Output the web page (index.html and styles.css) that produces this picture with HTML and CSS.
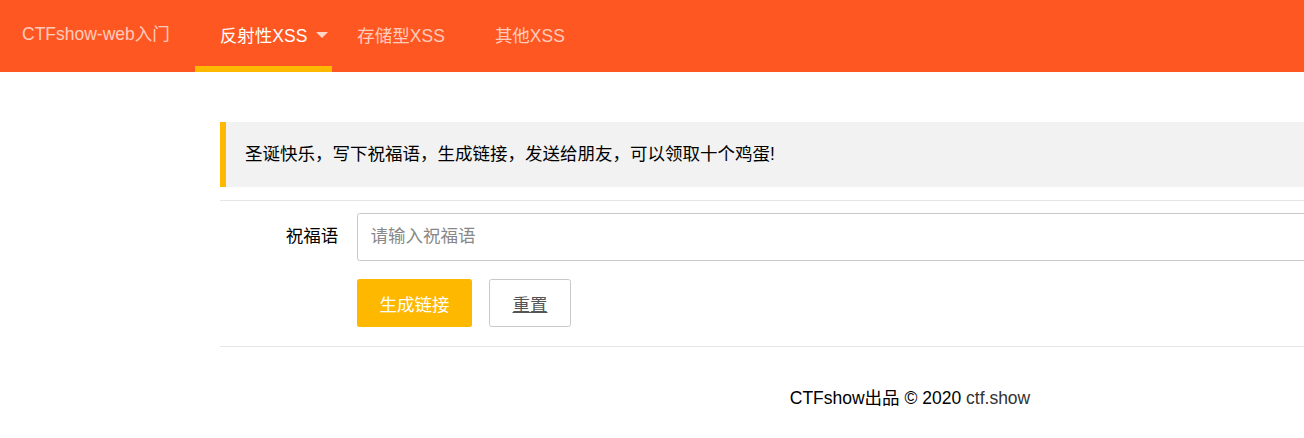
FILE: index.html
```html
<!DOCTYPE html>
<html lang="zh-CN">
<head>
<meta charset="utf-8">
<title>CTFshow-web入门</title>
<link rel="stylesheet" href="styles.css">
</head>
<body>
<header class="header">
  <div class="logo">CTFshow-web入门</div>
  <nav class="nav">
    <a class="nav-item active" href="#">反射性XSS<span class="caret"></span></a>
    <a class="nav-item" href="#">存储型XSS</a>
    <a class="nav-item" href="#">其他XSS</a>
  </nav>
</header>
<main class="main">
  <blockquote class="quote">圣诞快乐，写下祝福语，生成链接，发送给朋友，可以领取十个鸡蛋!</blockquote>
  <hr class="rule">
  <form class="form">
    <div class="form-item">
      <label class="label">祝福语</label>
      <input class="input" type="text" placeholder="请输入祝福语">
    </div>
    <div class="form-item actions">
      <button class="btn btn-warm" type="button">生成链接</button>
      <button class="btn btn-primary" type="reset">重置</button>
    </div>
  </form>
  <hr class="rule">
  <footer class="footer">CTFshow出品 © 2020 <a class="footer-link" href="#">ctf.show</a></footer>
</main>
</body>
</html>
```

FILE: styles.css
```css
html, body {
  margin: 0;
  padding: 0;
  overflow: hidden;
  background: #fff;
}
body {
  font-family: "Liberation Sans", Arial, "Noto Sans CJK SC", sans-serif;
  font-size: 17.5px;
  color: #000;
}
.header {
  height: 72px;
  background: #FF5722;
  display: flex;
  align-items: stretch;
}
.logo {
  padding: 0 25px 0 22px;
  line-height: 68px;
  color: rgba(255,255,255,0.7);
  white-space: nowrap;
}
.nav {
  display: flex;
}
.nav-item {
  position: relative;
  display: flex;
  align-items: center;
  padding: 0 25px 4px;
  color: rgba(255,255,255,0.7);
  text-decoration: none;
  white-space: nowrap;
}
.nav-item.active {
  color: #fff;
  padding-right: 4px;
}
.nav-item.active::after {
  content: "";
  position: absolute;
  left: 0;
  right: 0;
  bottom: 0;
  height: 6px;
  background: #FFB800;
}
.caret {
  width: 0;
  height: 0;
  margin-left: 9px;
  margin-top: 1px;
  border-left: 6px solid transparent;
  border-right: 6px solid transparent;
  border-top: 6px solid rgba(255,255,255,0.75);
}
.main {
  width: 1380px;
  margin: 50px 0 0 220px;
}
.quote {
  margin: 0;
  padding: 18.75px 18.75px 18.75px 19px;
  line-height: 27.5px;
  border-left: 6px solid #FFB800;
  background: #F2F2F2;
}
.rule {
  margin: 12.5px 0;
  height: 1px;
  border: 0;
  background: #E6E6E6;
}
.form {
  display: flex;
  flex-direction: column;
  gap: 18.75px;
}
.form-item {
  display: flex;
  align-items: center;
}
.label {
  width: 137px;
  box-sizing: border-box;
  padding: 11px 18.75px 11px 0;
  line-height: 25px;
  text-align: right;
}
.input {
  flex: 1;
  height: 47.5px;
  box-sizing: border-box;
  padding: 0 12.5px;
  border: 1px solid #C9C9C9;
  border-radius: 2.5px;
  font-family: inherit;
  font-size: 17.5px;
  color: #333;
  outline: none;
}
.input::placeholder {
  color: #888;
}
.actions {
  padding-left: 137px;
  gap: 17px;
}
.btn {
  height: 47.5px;
  box-sizing: border-box;
  padding: 0 22.5px;
  border-radius: 2.5px;
  font-family: inherit;
  font-size: 17.5px;
  cursor: pointer;
}
.btn-warm {
  border: 0;
  background: #FFB800;
  color: #fff;
}
.btn-primary {
  border: 1px solid #C9C9C9;
  background: #fff;
  color: #555;
  text-decoration: underline;
}
.form + .rule {
  margin-top: 18.75px;
}
.footer {
  padding-top: 27px;
  text-align: center;
  line-height: 25px;
}
.footer-link {
  color: #333;
  text-decoration: none;
}
```
